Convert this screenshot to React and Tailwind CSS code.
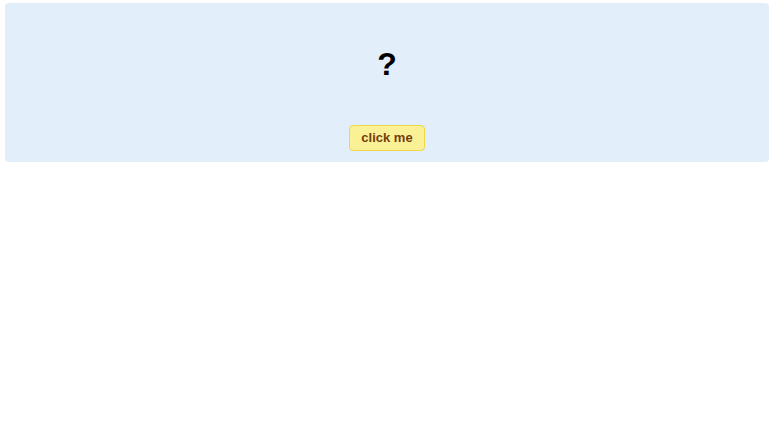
export default function App() {
  return (
    <div className="min-h-screen bg-white font-['Liberation_Sans',Arial,sans-serif]">
      <div className="ml-[5px] mr-[7px] mt-[3px] h-[159px] rounded bg-[#e2eefa] flex flex-col items-center pt-[45px]">
        <h1 className="text-[32px] leading-none font-bold text-black">?</h1>
        <button className="mt-[45px] px-[11px] py-1 text-[13px] leading-4 font-bold text-yellow-900 bg-[#faf196] border border-[#f0d64a] rounded">
          click me
        </button>
      </div>
    </div>
  );
}
